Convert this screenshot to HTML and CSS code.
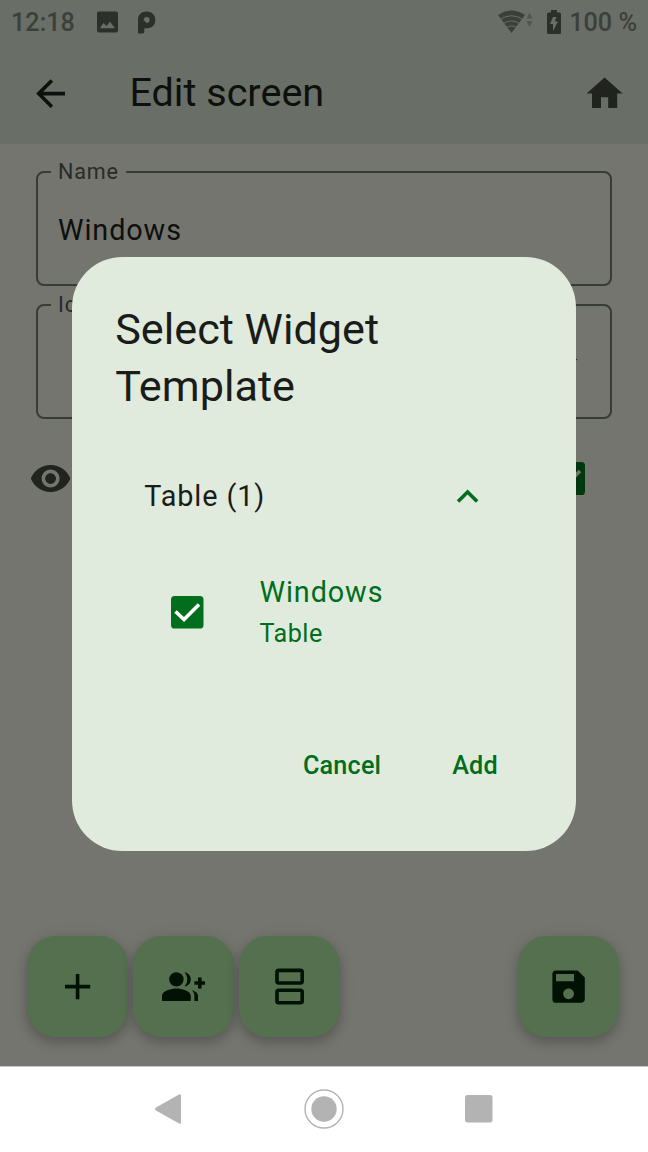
FILE: index.html
```html
<!DOCTYPE html>
<html lang="en">
<head>
<meta charset="utf-8">
<title>Edit screen</title>
<link rel="stylesheet" href="styles.css">
</head>
<body>
<div class="phone">
  <header class="top">
    <div class="status">
      <span class="clock">12:18</span>
      <svg class="status-image" width="22" height="22" viewBox="0 0 22 22"><path fill-rule="evenodd" d="M2 .5h17A2 2 0 0 1 21 2.500v17a2 2 0 0 1-2 2H2a2 2 0 0 1-2-2v-17a2 2 0 0 1 2-2zM3 17.300h15l-5-6.500-3.500 4.200-3-3z"/></svg>
      <svg class="status-p" width="18" height="23" viewBox="0 0 18 23"><path fill-rule="evenodd" d="M0 22.500V9C0 3.500 3.500.5 8.700.5S17.300 4 17.300 9s-3.300 8.200-8 8.200H6.300v3.500a1.800 1.800 0 0 1-1.800 1.800zM8.700 6A2.900 2.900 0 0 0 5.800 9v2.900h2.900a2.900 2.900 0 0 0 0-5.900z"/><circle cx="6.500" cy="11.500" r="1.500"/></svg>
      <span class="spacer"></span>
      <svg class="wifi" width="36" height="24" viewBox="0 0 36 24"><path class="wifi-fill" d="M0 5Q13.500-4 27 5L13.500 23z"/><path class="wifi-lines" d="M2 9.500Q13.500 2 25 9.500M5 13.700Q13.500 8 22 13.700M8 17.800Q13.500 14 19 17.800"/><path class="traffic" d="M28.500 8.500l3-6 3 6zM28.500 11l3 6 3-6z"/></svg>
      <svg class="battery" width="14" height="24" viewBox="0 0 14 24"><path fill-rule="evenodd" d="M4 0h6v2.500h2.500A1.500 1.500 0 0 1 14 4v18.500a1.500 1.500 0 0 1-1.500 1.500h-11A1.500 1.500 0 0 1 0 22.500V4a1.500 1.500 0 0 1 1.500-1.500H4zM6 7l-3 7h3v7l5-9.500H7.800L9.500 7z"/></svg>
      <span class="percent">100 %</span>
    </div>
    <div class="appbar">
      <svg class="back" width="43.200" height="43.200" viewBox="0 0 24 24"><path d="M20 11H7.830l5.590-5.590L12 4l-8 8 8 8 1.410-1.410L7.830 13H20z"/></svg>
      <h1 class="screen-title">Edit screen</h1>
      <svg class="home" width="43.200" height="43.200" viewBox="0 0 24 24"><path d="M10 20v-6h4v6h5v-8h3L12 3 2 12h3v8z"/></svg>
    </div>
  </header>

  <main class="content">
    <fieldset class="field"><legend>Name</legend><div class="value">Windows</div></fieldset>
    <fieldset class="field"><legend>Icon</legend><div class="value picker"><svg class="caret" width="43.200" height="43.200" viewBox="0 0 24 24"><path d="M7 10l5 5 5-5z"/></svg></div></fieldset>
    <div class="visible-row">
      <svg class="eye" width="43.200" height="43.200" viewBox="0 0 24 24"><path d="M12 4.500C7 4.500 2.730 7.610 1 12c1.730 4.390 6 7.500 11 7.500s9.270-3.110 11-7.500c-1.730-4.390-6-7.500-11-7.500zM12 17c-2.760 0-5-2.240-5-5s2.240-5 5-5 5 2.240 5 5-2.240 5-5 5zm0-8c-1.660 0-3 1.340-3 3s1.340 3 3 3 3-1.340 3-3-1.340-3-3-3z"/></svg>
      <svg class="row-check" width="33" height="33" viewBox="0 0 33 33"><rect width="33" height="33" rx="3.600"/><path d="M5 16l8 8L28 9"/></svg>
    </div>
    <div class="actions">
      <button class="fab"><svg width="43.200" height="43.200" viewBox="0 0 24 24"><path d="M19 13h-6v6h-2v-6H5v-2h6V5h2v6h6z"/></svg></button>
      <button class="fab"><svg width="43.200" height="43.200" viewBox="0 0 24 24"><path d="M22 9V7h-2v2h-2v2h2v2h2v-2h2V9z"/><circle cx="8" cy="8" r="4"/><path d="M8 13c-2.670 0-8 1.340-8 4v3h16v-3c0-2.660-5.330-4-8-4zM12.510 4.050C13.430 5.110 14 6.490 14 8s-.57 2.890-1.490 3.950C14.470 11.700 16 10.040 16 8s-1.530-3.700-3.490-3.950zM16.530 13.830C17.420 14.660 18 15.700 18 17v3h2v-3c0-1.450-1.590-2.510-3.470-3.170z"/></svg></button>
      <button class="fab"><svg width="43.200" height="43.200" viewBox="0 0 24 24"><path fill-rule="evenodd" d="M18 13H6a2 2 0 0 0-2 2v5a2 2 0 0 0 2 2h12a2 2 0 0 0 2-2v-5a2 2 0 0 0-2-2zm0 7H6v-5h12zM18 2H6a2 2 0 0 0-2 2v5a2 2 0 0 0 2 2h12a2 2 0 0 0 2-2V4a2 2 0 0 0-2-2zm0 7H6V4h12z"/></svg></button>
      <span class="spacer"></span>
      <button class="fab"><svg width="43.200" height="43.200" viewBox="0 0 24 24"><path d="M17 3H5a2 2 0 0 0-2 2v14a2 2 0 0 0 2 2h14c1.100 0 2-.9 2-2V7zm-5 16c-1.660 0-3-1.340-3-3s1.340-3 3-3 3 1.340 3 3-1.340 3-3 3zm3-10H5V5h10z"/></svg></button>
    </div>
  </main>

  <nav class="navbar">
    <svg width="27" height="30" viewBox="0 0 27 30"><path d="M1 13.600L24 .5Q26 -.3 26 1.500v27q0 1.800-2 1L1 16.400Q-1 15 1 13.600z"/></svg>
    <svg width="40" height="40" viewBox="0 0 40 40"><circle cx="20" cy="20" r="12.700"/><circle class="ring" cx="20" cy="20" r="19"/></svg>
    <svg width="28" height="28" viewBox="0 0 28 28"><rect width="27.500" height="27.500" rx="2.500"/></svg>
  </nav>

  <section class="dialog" role="dialog">
    <h2 class="dialog-title">Select Widget Template</h2>
    <div class="group">
      <span>Table (1)</span>
      <svg width="43.200" height="43.200" viewBox="0 0 24 24"><path d="M12 8l-6 6 1.410 1.410L12 10.830l4.590 4.580L18 14z"/></svg>
    </div>
    <div class="option">
      <svg width="33" height="33" viewBox="0 0 33 33"><rect width="32.500" height="32.500" rx="3.600"/><path d="M4.500 15.500l8.500 8L28 8.500"/></svg>
      <div><div class="option-name">Windows</div><div class="option-type">Table</div></div>
    </div>
    <div class="dialog-actions"><button>Cancel</button><button>Add</button></div>
  </section>
</div>
</body>
</html>
```
FILE: styles.css
```css
* { box-sizing: border-box; }
body { margin: 0; font-family: Roboto, "Liberation Sans", sans-serif; }
svg { display: block; flex: none; }
button { border: 0; background: none; padding: 0; font: inherit; }
.spacer { flex: 1; }

.phone {
  position: relative;
  width: 648px;
  height: 1152px;
  display: flex;
  flex-direction: column;
  overflow: hidden;
  background: #757570;
}

.top { height: 144px; flex: none; background: #696e66; }
.status {
  height: 43px;
  display: flex;
  align-items: center;
  padding: 1px 11px 0 11px;
  font-size: 25.2px;
  font-weight: 500;
  color: #3c403b;
  fill: #2c302b;
}
.clock { width: 86px; padding-top: 1px; }
.status-p { margin-left: 19px; }
.wifi { margin-right: 13px; }
.wifi-fill { fill: #3c403b; }
.wifi-lines { fill: none; stroke: #696e66; stroke-width: 1; }
.traffic { fill: #505550; }
.battery { margin-right: 8px; }
.percent { padding-top: 1px; }

.appbar {
  height: 101px;
  display: flex;
  align-items: center;
  padding: 0 22px 0 29px;
}
.back { fill: #0e100d; }
.home { fill: #20231e; }
.screen-title {
  flex: 1;
  margin: -2px 0 0 57.200px;
  font-size: 39.6px;
  font-weight: 400;
  line-height: 50px;
  color: #0e100d;
}

.content {
  flex: 1;
  display: flex;
  flex-direction: column;
  padding: 17px 29px 0 26.800px;
}
.field {
  height: 125px;
  flex: none;
  margin: 0 7px 8px 9.200px;
  padding: 0;
  border: 2px solid #373c36;
  border-radius: 8px;
}
.field legend {
  margin-left: 13px;
  padding: 0 7px;
  font-size: 21.6px;
  line-height: 22px;
  letter-spacing: .8px;
  color: #282b27;
}
.value {
  height: 94px;
  padding-left: 20px;
  font-size: 28.8px;
  line-height: 94px;
  letter-spacing: .9px;
  color: #0e100d;
}
.picker { display: flex; align-items: center; justify-content: flex-end; padding-right: 19.500px; }
.caret { fill: #20231e; }
.visible-row {
  height: 87px;
  display: flex;
  align-items: center;
  justify-content: space-between;
  margin-top: 8px;
  padding: 0 34px 0 2px;
}
.eye { fill: #20231e; }
.row-check { fill: #00370e; }
.row-check path { fill: none; stroke: #757570; stroke-width: 3.6; }
.actions { display: flex; gap: 5.400px; margin-top: auto; padding-bottom: 28.700px; }
.fab {
  width: 100.800px;
  height: 100.800px;
  display: grid;
  place-items: center;
  border-radius: 28.800px;
  background: #54704f;
  fill: #001203;
  box-shadow: 0 6px 11px rgba(0, 0, 0, .18), 0 2px 16px rgba(0, 0, 0, .1);
}

.navbar {
  position: relative;
  height: 86.500px;
  flex: none;
  display: flex;
  align-items: center;
  justify-content: space-between;
  padding: 0 155px 0 154.500px;
  border-top: 1px solid #c7c5c5;
  background: #fff;
  fill: #b3b3b3;
}
.navbar svg:nth-child(2) { margin-left: 1px; }
.ring { fill: none; stroke: #b3b3b3; stroke-width: 1.4; }

.dialog {
  position: absolute;
  left: 72px;
  top: 257.400px;
  width: 504px;
  height: 594px;
  padding: 43.200px;
  border-radius: 50.400px;
  background: #e0ebde;
  color: #1a1c19;
}
.dialog-title {
  width: 300px;
  margin: 0;
  font-size: 43.2px;
  font-weight: 400;
  line-height: 57.600px;
}
.group {
  height: 100px;
  display: flex;
  align-items: center;
  justify-content: space-between;
  margin-top: 30.500px;
  padding: 0 43.700px 0 29px;
  font-size: 28.8px;
  letter-spacing: .9px;
}
.group svg { fill: #006e1c; }
.option {
  height: 132px;
  display: flex;
  align-items: center;
  gap: 55.500px;
  padding-left: 55.800px;
  color: #006e1c;
}
.option svg { fill: #006e1c; }
.option svg path { fill: none; stroke: #fff; stroke-width: 3.6; }
.option-name { font-size: 28.8px; line-height: 43px; letter-spacing: .9px; }
.option-type { font-size: 25.2px; line-height: 39px; letter-spacing: .45px; }
.dialog-actions {
  display: flex;
  justify-content: flex-end;
  gap: 71px;
  margin-top: 68px;
  padding-right: 35px;
}
.dialog-actions button {
  font-size: 25.2px;
  font-weight: 500;
  line-height: 40px;
  letter-spacing: .18px;
  color: #006e1c;
}
```
